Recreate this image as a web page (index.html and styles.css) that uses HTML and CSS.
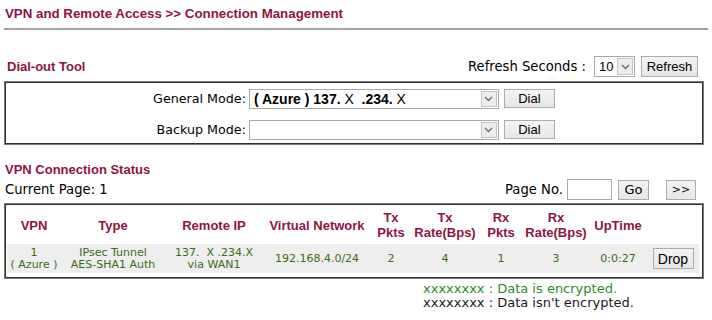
FILE: index.html
```html
<!DOCTYPE html>
<html>
<head>
<meta charset="utf-8">
<link rel="stylesheet" href="styles.css">
</head>
<body>
<div class="page">
  <div class="title">VPN and Remote Access &gt;&gt; Connection Management</div>
  <div class="rule"></div>

  <div class="toolbar">
    <div class="section">Dial-out Tool</div>
    <div class="refresh">
      <span class="lbl-lg">Refresh Seconds :</span>
      <div class="sel sel-sm"><span class="val val-arial">10</span><span class="arrow"><svg width="9" height="6" viewBox="0 0 9 6"><polyline points="1,1 4.5,4.5 8,1" fill="none" stroke="#6b6b6b" stroke-width="1.4"/></svg></span></div>
      <button class="btn btn-refresh">Refresh</button>
    </div>
  </div>

  <div class="box dial">
    <span class="lbl">General Mode:</span>
    <div class="sel sel-lg"><span class="val val-arial val-big"><b>( Azure ) 137.</b> X &nbsp;<b>.234.</b> X</span><span class="arrow"><svg width="9" height="6" viewBox="0 0 9 6"><polyline points="1,1 4.5,4.5 8,1" fill="none" stroke="#6b6b6b" stroke-width="1.4"/></svg></span></div>
    <button class="btn btn-dial">Dial</button>
    <span class="lbl">Backup Mode:</span>
    <div class="sel sel-lg"><span class="val"></span><span class="arrow"><svg width="9" height="6" viewBox="0 0 9 6"><polyline points="1,1 4.5,4.5 8,1" fill="none" stroke="#6b6b6b" stroke-width="1.4"/></svg></span></div>
    <button class="btn btn-dial">Dial</button>
  </div>

  <div class="section status-title">VPN Connection Status</div>
  <div class="pager">
    <span class="lbl-lg">Current Page: 1</span>
    <div class="pager-right">
      <span class="lbl-lg">Page No.</span>
      <span class="input"></span>
      <button class="btn btn-go">Go</button>
      <button class="btn btn-next">&gt;&gt;</button>
    </div>
  </div>

  <div class="box status">
    <table class="vpn">
      <colgroup>
        <col style="width:54px"><col style="width:104px"><col style="width:98px"><col style="width:108px"><col style="width:40px"><col style="width:68px"><col style="width:44px"><col style="width:66px"><col style="width:58px"><col style="width:52px">
      </colgroup>
      <thead>
        <tr>
          <th>VPN</th><th>Type</th><th>Remote IP</th><th>Virtual Network</th><th>Tx<br>Pkts</th><th>Tx<br>Rate(Bps)</th><th>Rx<br>Pkts</th><th>Rx<br>Rate(Bps)</th><th>UpTime</th><th></th>
        </tr>
      </thead>
      <tbody>
        <tr>
          <td>1<br>( Azure )</td>
          <td>IPsec Tunnel<br>AES-SHA1 Auth</td>
          <td>137.&nbsp; X .234.X<br>via WAN1</td>
          <td>192.168.4.0/24</td>
          <td>2</td>
          <td>4</td>
          <td>1</td>
          <td>3</td>
          <td>0:0:27</td>
          <td><button class="btn btn-drop">Drop</button></td>
        </tr>
      </tbody>
    </table>
  </div>

  <div class="legend">
    <div class="enc">xxxxxxxx : Data is encrypted.</div>
    <div class="noenc">xxxxxxxx : Data isn't encrypted.</div>
  </div>
</div>
</body>
</html>
```
FILE: styles.css
```css
* { box-sizing: border-box; }
body {
  margin: 0;
  background: #fff;
  color: #000;
  font-family: "DejaVu Sans", Verdana, sans-serif;
  font-size: 12px;
}
.page { padding: 0 8px 0 4px; }

.title {
  font: bold 13.3px/16px "Liberation Sans", Arial, sans-serif;
  color: #8e1444;
  padding: 6px 0 0 1px;
}
.rule {
  height: 2px;
  background: #a3a3a3;
  margin-top: 6px;
  margin-right: -4px;
}

.section {
  font: bold 13px/16px "Liberation Sans", Arial, sans-serif;
  color: #8e1444;
}

.toolbar {
  display: flex;
  justify-content: space-between;
  align-items: center;
  height: 21px;
  margin-top: 26px;
  padding: 0 6px 0 3px;
}
.refresh { display: flex; align-items: center; }
.lbl-lg { font-size: 13.2px; }
.refresh .lbl-lg { margin-right: 8px; }

.sel {
  display: flex;
  align-items: stretch;
  background: #fff;
  border: 1px solid #a9a9a9;
  padding: 1px;
}
.sel .val {
  flex: 1;
  display: flex;
  align-items: center;
  padding-left: 3px;
  white-space: pre;
}
.val-arial { font: 13px "Liberation Sans", Arial, sans-serif; }
.val-big { font-size: 14px; }
.val-arial b { font-weight: bold; }
.sel .arrow {
  width: 16px;
  display: flex;
  align-items: center;
  justify-content: center;
  background: #ececec;
  border: 1px solid #c4c4c4;
}
.sel-sm { width: 41px; height: 21px; }
.sel-lg { width: 250px; height: 20px; }

.btn {
  font: 13px "Liberation Sans", Arial, sans-serif;
  color: #000;
  background: linear-gradient(#f4f4f4, #e6e6e6);
  border: 1px solid #acacac;
  border-radius: 0;
  padding: 0;
  margin: 0;
}
.btn-refresh { width: 57px; height: 21px; margin-left: 6px; }
.btn-dial { width: 51px; height: 19px; margin-left: 5px; }
.btn-go { width: 31px; height: 20px; margin-left: 6px; font: 13px "DejaVu Sans", Verdana, sans-serif; }
.btn-next { width: 30px; height: 20px; margin-left: 17px; font: 11px "DejaVu Sans", Verdana, sans-serif; }
.btn-drop { width: 41px; height: 21px; font-size: 14px; }

.box {
  border: 1px solid #7a7a7a;
  box-shadow: inset 0 0 0 1px #2e2e2e;
}
.dial {
  margin-top: 4px;
  height: 64px;
  padding: 6px 2px 4px;
  display: grid;
  grid-template-columns: auto auto auto;
  justify-content: center;
  align-items: center;
  row-gap: 10px;
}
.dial .lbl {
  font-size: 12.7px;
  text-align: right;
  padding-right: 3px;
}

.status-title {
  margin-top: 17px;
  font-size: 13px;
  padding-left: 1px;
}
.pager {
  display: flex;
  justify-content: space-between;
  align-items: center;
  height: 21px;
  margin-top: 1px;
  padding: 0 8px 0 1px;
}
.pager-right { display: flex; align-items: center; }
.input {
  display: inline-block;
  width: 45px;
  height: 21px;
  border: 1px solid #a9a9a9;
  background: #fff;
  margin-left: 4px;
}

.status {
  margin-top: 3px;
  padding: 2px 2px 5px;
}
.vpn {
  table-layout: fixed;
  width: 692px;
  border-collapse: collapse;
}
.vpn th {
  height: 38px;
  padding: 0;
  font: bold 13px/15px "Liberation Sans", Arial, sans-serif;
  color: #8e1444;
  text-align: center;
  vertical-align: middle;
  white-space: nowrap;
}
.vpn td {
  height: 29px;
  padding: 0;
  background: #eeeeee;
  font: 11px/12px "DejaVu Sans", Verdana, sans-serif;
  color: #3b6b14;
  text-align: center;
  vertical-align: middle;
  white-space: nowrap;
}

.legend {
  margin-top: 3px;
  padding-left: 419px;
  font-size: 13px;
  line-height: 14px;
}
.enc { color: #2f8a2a; }
.noenc { color: #1a1a1a; }
```
